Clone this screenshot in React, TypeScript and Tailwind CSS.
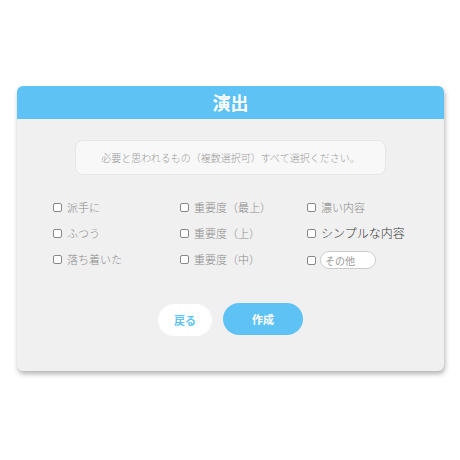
import React from 'react';

const cols: string[][] = [
  ['派手に', 'ふつう', '落ち着いた'],
  ['重要度（最上）', '重要度（上）', '重要度（中）'],
];

function Check({ label, dark }: { label: string; dark?: boolean }) {
  return (
    <label className="flex items-center gap-[5px] h-[26px]">
      <span className="w-[9px] h-[9px] border border-[#888] rounded-[2px] bg-white shrink-0" />
      <span className={dark ? 'text-[12px] text-[#333] font-light' : 'text-[11px] text-[#8a8a8a] font-light'}>{label}</span>
    </label>
  );
}

export default function App() {
  return (
    <div
      className="w-[460px] h-[460px] bg-white pt-[86px] pl-[17px]"
      style={{ fontFamily: '"Noto Sans CJK JP", "Noto Sans", sans-serif' }}
    >
      <div className="w-[427px] h-[285px] bg-[#f0f0f0] rounded-[6px] shadow-[1px_3px_5px_rgba(0,0,0,0.3)] overflow-hidden flex flex-col">
        <div className="h-[33px] bg-[#5fc2f5] flex items-center justify-center">
          <span className="text-white font-bold text-[18px]">演出</span>
        </div>

        <div className="flex justify-center mt-[21px]">
          <div className="w-[311px] h-[35px] bg-[#f8f8f8] border border-[#e6e6e6] rounded-[8px] flex items-center justify-center text-[10px] text-[#999] font-light">
            必要と思われるもの（複数選択可）すべて選択ください。
          </div>
        </div>

        <div className="grid grid-cols-[127px_127px_1fr] pl-[36px] mt-[19px]">
          {cols.map((c, i) => (
            <div key={i} className="flex flex-col">
              {c.map((l) => (
                <Check key={l} label={l} />
              ))}
            </div>
          ))}
          <div className="flex flex-col">
            <Check label="濃い内容" />
            <Check label="シンプルな内容" dark />
            <div className="flex items-center gap-[4px] h-[26px] mt-[1px]">
              <span className="w-[9px] h-[9px] border border-[#888] rounded-[2px] bg-white shrink-0" />
              <input
                placeholder="その他"
                className="w-[56px] h-[18px] rounded-full border border-[#ccc] bg-white px-[4px] text-[10px] outline-none placeholder:text-[#999]"
              />
            </div>
          </div>
        </div>

        <div className="flex justify-center gap-[11px] mt-[31px]">
          <button className="w-[54px] h-[32px] rounded-full bg-white text-[#5fc2f5] font-bold text-[11px]">戻る</button>
          <button className="w-[80px] h-[32px] rounded-full bg-[#5fc2f5] text-white font-bold text-[11px] -mt-[1px]">作成</button>
        </div>
      </div>
    </div>
  );
}
